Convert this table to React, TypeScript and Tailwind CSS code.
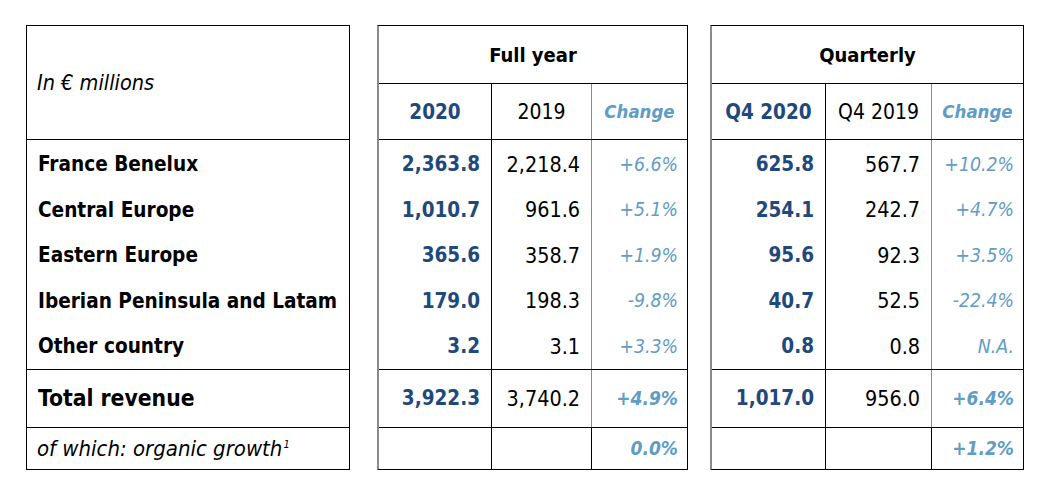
const dark = "text-[#1f497d]";
const light = "text-[#5f9cc6]";

const body = [
  {
    name: "France Benelux",
    fy: ["2,363.8", "2,218.4", "+6.6%"],
    q: ["625.8", "567.7", "+10.2%"],
  },
  {
    name: "Central Europe",
    fy: ["1,010.7", "961.6", "+5.1%"],
    q: ["254.1", "242.7", "+4.7%"],
  },
  {
    name: "Eastern Europe",
    fy: ["365.6", "358.7", "+1.9%"],
    q: ["95.6", "92.3", "+3.5%"],
  },
  {
    name: "Iberian Peninsula and Latam",
    fy: ["179.0", "198.3", "-9.8%"],
    q: ["40.7", "52.5", "-22.4%"],
  },
  {
    name: "Other country",
    fy: ["3.2", "3.1", "+3.3%"],
    q: ["0.8", "0.8", "N.A."],
  },
];

type Widths = [string, string, string];

function NumTable({
  title,
  heads,
  widths,
  tableW,
  rows,
  total,
  organic,
}: {
  title: string;
  heads: [string, string];
  widths: Widths;
  tableW: string;
  rows: string[][];
  total: string[];
  organic: string;
}) {
  return (
    <div
      className={`${tableW} h-[445px] flex flex-col border border-black border-l-2 border-l-[#8a8a8a]`}
    >
      <div className="h-[58px] border-b border-black flex items-center justify-center font-bold text-[20px]">
        {title}
      </div>
      <div className="h-[56px] border-b border-black flex">
        <div
          className={`${widths[0]} border-r border-black flex items-center justify-center pt-[2px] font-bold text-[20.5px] ${dark}`}
        >
          {heads[0]}
        </div>
        <div
          className={`${widths[1]} border-r border-r-[#8a8a8a] flex items-center justify-center pt-[2px] text-[21px]`}
        >
          {heads[1]}
        </div>
        <div
          className={`${widths[2]} flex items-center justify-center pt-[2px] italic font-bold text-[18.5px] ${light}`}
        >
          Change
        </div>
      </div>
      <div className="h-[230px] border-b border-black flex">
        <div
          className={`${widths[0]} border-r border-black flex flex-col pt-[2px]`}
        >
          {rows.map((r, i) => (
            <div
              key={i}
              className={`h-[45.5px] flex items-center justify-end pr-[11px] font-bold text-[20.5px] ${dark}`}
            >
              {r[0]}
            </div>
          ))}
        </div>
        <div
          className={`${widths[1]} border-r border-r-[#8a8a8a] flex flex-col pt-[2px]`}
        >
          {rows.map((r, i) => (
            <div
              key={i}
              className="h-[45.5px] flex items-center justify-end pr-[11px] text-[21.4px]"
            >
              {r[1]}
            </div>
          ))}
        </div>
        <div className={`${widths[2]} flex flex-col pt-[2px]`}>
          {rows.map((r, i) => (
            <div
              key={i}
              className={`h-[45.5px] flex items-center justify-end pr-[9px] italic text-[19.3px] ${light}`}
            >
              {r[2]}
            </div>
          ))}
        </div>
      </div>
      <div className="h-[58px] border-b border-black flex">
        <div
          className={`${widths[0]} border-r border-black flex items-center justify-end pr-[11px] font-bold text-[20.5px] ${dark}`}
        >
          {total[0]}
        </div>
        <div
          className={`${widths[1]} border-r border-r-[#8a8a8a] flex items-center justify-end pr-[11px] text-[21.4px]`}
        >
          {total[1]}
        </div>
        <div
          className={`${widths[2]} flex items-center justify-end pr-[9px] italic font-bold text-[19px] ${light}`}
        >
          {total[2]}
        </div>
      </div>
      <div className="flex-1 flex">
        <div className={`${widths[0]} border-r border-black`} />
        <div className={`${widths[1]} border-r border-black`} />
        <div
          className={`${widths[2]} flex items-center justify-end pr-[9px] italic font-bold text-[19px] ${light}`}
        >
          {organic}
        </div>
      </div>
    </div>
  );
}

export default function App() {
  return (
    <div
      className="w-[1048px] h-[485px] bg-white text-black text-[20px] leading-none flex items-start gap-[27px] pl-[26px] pt-[25px] font-stretch-condensed"
      style={{ fontFamily: '"DejaVu Sans Condensed", "DejaVu Sans", sans-serif' }}
    >
      <div className="w-[324px] h-[445px] flex flex-col border border-black">
        <div className="h-[114px] border-b border-black flex items-center pl-[10px] italic text-[21.5px]">
          In € millions
        </div>
        <div className="h-[230px] border-b border-black flex flex-col pt-[2px]">
          {body.map((r) => (
            <div
              key={r.name}
              className="h-[45.5px] flex items-center pl-[11px] font-bold text-[20.6px]"
            >
              {r.name}
            </div>
          ))}
        </div>
        <div className="h-[58px] border-b border-black flex items-center pl-[11px] font-bold text-[22.7px]">
          Total revenue
        </div>
        <div className="flex-1 flex items-center pl-[10px] italic text-[22px]">
          <span>
            of which: organic growth
            <span className="relative -top-[8px] ml-[1px] text-[11px]">1</span>
          </span>
        </div>
      </div>

      <NumTable
        title="Full year"
        heads={["2020", "2019"]}
        widths={["w-[113px]", "w-[100px]", "w-[95px]"]}
        tableW="w-[311px]"
        rows={body.map((r) => r.fy)}
        total={["3,922.3", "3,740.2", "+4.9%"]}
        organic="0.0%"
      />
      <div className="-ml-[5px]">
        <NumTable
          title="Quarterly"
          heads={["Q4 2020", "Q4 2019"]}
          widths={["w-[114px]", "w-[106px]", "w-[91px]"]}
          tableW="w-[314px]"
          rows={body.map((r) => r.q)}
          total={["1,017.0", "956.0", "+6.4%"]}
          organic="+1.2%"
        />
      </div>
    </div>
  );
}
